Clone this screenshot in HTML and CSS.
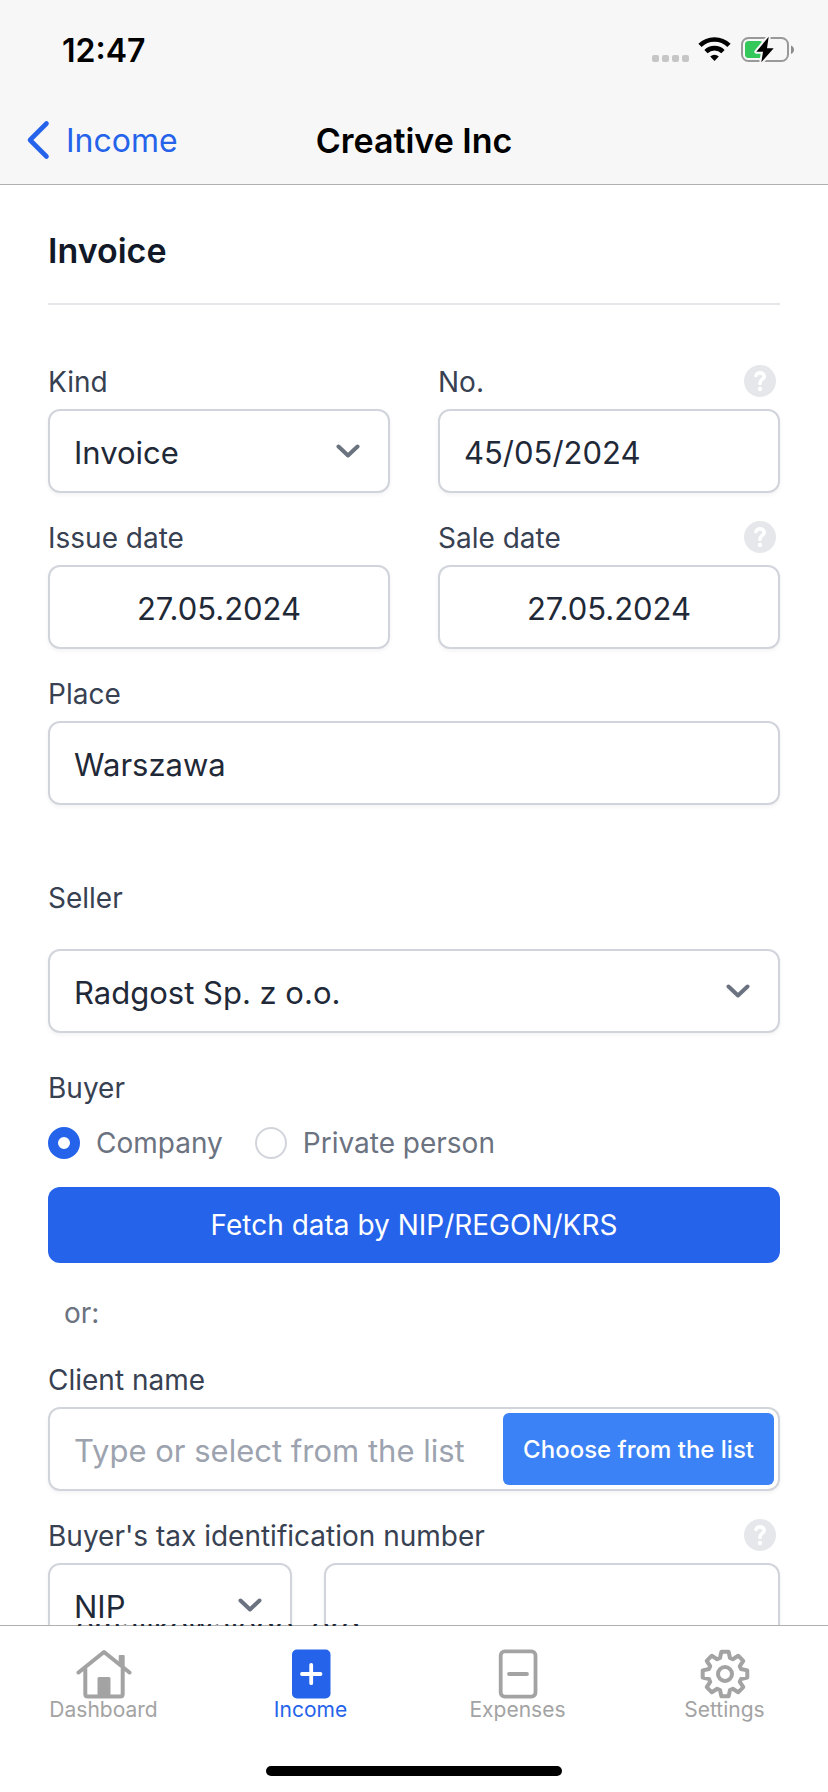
FILE: index.html
```html
<!DOCTYPE html>
<html lang="en">
<head>
<meta charset="utf-8">
<meta name="viewport" content="width=device-width, initial-scale=1">
<title>Creative Inc</title>
<link rel="stylesheet" href="styles.css">
</head>
<body class="app">
<header class="topbar">
  <div class="status">
    <time class="clock">12:47</time>
    <div class="status-icons">
      <svg width="37" height="7" viewBox="0 0 37 7" fill="#c6c6c6"><rect width="7" height="7" rx="2"/><rect x="10" width="7" height="7" rx="2"/><rect x="20" width="7" height="7" rx="2"/><rect x="30" width="7" height="7" rx="2"/></svg>
      <svg class="wifi" width="33" height="26" viewBox="0 0 33 26" fill="none" stroke="#000" stroke-width="4.6"><path d="M2 9.4a20.6 20.6 0 0 1 29 0"/><path d="M8 15.7a12 12 0 0 1 17 0"/><path d="M12.2 20.4a6.2 6.2 0 0 1 8.6 0L16.500 25z" fill="#000" stroke="none"/></svg>
      <svg width="55" height="28" viewBox="0 0 55 28"><rect x="2" y="2" width="46" height="23" rx="6.500" fill="none" stroke="#999" stroke-width="2"/><path d="M51 9.500c4 1.500 4 7 0 8.500z" fill="#8c8c8c"/><rect x="5" y="5" width="18" height="17" rx="3.500" fill="#34c759"/><path d="M28.700.7 16.300 15.700H23L21.300 26.300 33.700 12.300H27z" fill="#000" stroke="#f7f7f7" stroke-width="4" stroke-linejoin="round" paint-order="stroke"/></svg>
    </div>
  </div>
  <nav class="nav">
    <a class="back" href="#income"><svg width="24" height="40" viewBox="0 0 24 40" fill="none" stroke="#2563eb" stroke-width="4.600" stroke-linecap="round" stroke-linejoin="round"><path d="M20.500 3.500 4 20l16.500 16.500"/></svg>Income</a>
    <h1 class="nav-title">Creative Inc</h1>
  </nav>
</header>

<main class="content">
  <h2 class="heading">Invoice</h2>
  <form class="form">
    <div class="row">
      <div class="field">
        <div class="label-row"><label for="kind">Kind</label></div>
        <div class="select"><select class="control" id="kind"><option>Invoice</option></select><svg class="chevron" viewBox="0 0 24 14"><path d="M2.500 2.500 12 11.500l9.500-9"/></svg></div>
      </div>
      <div class="field">
        <div class="label-row"><label for="no">No.</label><button class="help" type="button" aria-label="Help: No."><svg viewBox="0 0 32 32"><path d="M12 10.500c.6-1.700 2.100-2.600 4-2.600 2.400 0 4.200 1.400 4.200 3.500 0 3-4.200 3-4.200 6.400v.7"/><circle cx="16" cy="24" r="2.200"/></svg></button></div>
        <input class="control" id="no" type="text" value="45/05/2024">
      </div>
    </div>
    <div class="row">
      <div class="field">
        <div class="label-row"><label for="issue">Issue date</label></div>
        <input class="control centered" id="issue" type="text" value="27.05.2024">
      </div>
      <div class="field">
        <div class="label-row"><label for="sale">Sale date</label><button class="help" type="button" aria-label="Help: Sale date"><svg viewBox="0 0 32 32"><path d="M12 10.500c.6-1.700 2.100-2.600 4-2.600 2.400 0 4.200 1.400 4.200 3.500 0 3-4.200 3-4.200 6.400v.7"/><circle cx="16" cy="24" r="2.200"/></svg></button></div>
        <input class="control centered" id="sale" type="text" value="27.05.2024">
      </div>
    </div>
    <div class="field">
      <div class="label-row"><label for="place">Place</label></div>
      <input class="control" id="place" type="text" value="Warszawa">
    </div>
    <div class="field seller">
      <div class="label-row"><label for="seller">Seller</label></div>
      <div class="select"><select class="control" id="seller"><option>Radgost Sp. z o.o.</option></select><svg class="chevron" viewBox="0 0 24 14"><path d="M2.500 2.500 12 11.500l9.500-9"/></svg></div>
    </div>
    <fieldset class="buyer">
      <legend class="legend">Buyer</legend>
      <div class="radios">
        <label class="radio"><input type="radio" name="buyer" checked>Company</label>
        <label class="radio"><input type="radio" name="buyer">Private person</label>
      </div>
    </fieldset>
    <button class="fetch" type="button">Fetch data by NIP/REGON/KRS</button>
    <p class="or">or:</p>
    <div class="field">
      <div class="label-row"><label for="client">Client name</label></div>
      <div class="combo"><input class="combo-input" id="client" type="text" placeholder="Type or select from the list"><button class="choose" type="button">Choose from the list</button></div>
    </div>
    <div class="field">
      <div class="label-row"><label for="tax">Buyer's tax identification number</label><button class="help" type="button" aria-label="Help: tax identification number"><svg viewBox="0 0 32 32"><path d="M12 10.500c.6-1.700 2.100-2.600 4-2.600 2.400 0 4.200 1.400 4.200 3.500 0 3-4.200 3-4.200 6.400v.7"/><circle cx="16" cy="24" r="2.200"/></svg></button></div>
      <div class="tax">
        <div class="select"><select class="control" aria-label="Identifier type"><option>NIP</option></select><svg class="chevron" viewBox="0 0 24 14"><path d="M2.500 2.500 12 11.500l9.500-9"/></svg></div>
        <input class="control" id="tax" type="text">
      </div>
    </div>
  </form>
</main>

<footer class="bottom">
  <div class="peek">emailkowalego .org</div>
  <nav class="tabs">
    <a class="tab" href="#dashboard"><svg width="56" height="50" viewBox="-28 -25 56 50" fill="none" stroke="#a3a3a3" stroke-width="4" stroke-linecap="round" stroke-linejoin="round"><path d="M-25.500-1.500 0-22 25.500-1.500M-18.700-5v25q0 2.500 2.500 2.500h32.400q2.500 0 2.500-2.500V-5"/><path d="M-6.500 22.500V4.500q0-1.500 1.500-1.500H5q1.500 0 1.500 1.500v18zM14.700-10v-8q0-1 1-1h4q1 0 1 1v13z" fill="#a3a3a3" stroke="none"/></svg>Dashboard</a>
    <a class="tab active" href="#income"><svg width="56" height="50" viewBox="-28 -25 56 50" fill="none" stroke-linecap="round"><rect x="-19" y="-24.500" width="38.500" height="49" rx="5" fill="#2563eb"/><path d="M-9 0H9.500M.2-9.200V9.200" stroke="#fff" stroke-width="3.800"/></svg>Income</a>
    <a class="tab" href="#expenses"><svg width="56" height="50" viewBox="-28 -25 56 50" fill="none" stroke="#a3a3a3" stroke-width="3.800" stroke-linecap="round"><rect x="-17.300" y="-22.600" width="34.800" height="45.200" rx="4"/><path d="M-9 0H9"/></svg>Expenses</a>
    <a class="tab" href="#settings"><svg width="56" height="50" viewBox="-28 -25 56 50" fill="none" stroke="#a3a3a3" stroke-width="4" stroke-linejoin="round"><circle r="7"/><path d="M-5-16-3.600-22.300H3.600L5-16 7.800-14.800 13.200-18.300 18.300-13.200 14.800-7.800 16-5 22.300-3.600V3.600L16 5 14.800 7.800 18.300 13.200 13.200 18.300 7.800 14.800 5 16 3.600 22.300H-3.600L-5 16-7.800 14.800-13.200 18.300-18.300 13.200-14.800 7.800-16 5-22.300 3.600V-3.600L-16-5-14.800-7.800-18.300-13.200-13.200-18.300-7.800-14.800z"/></svg>Settings</a>
  </nav>
  <div class="home-bar"></div>
</footer>
</body>
</html>
```
FILE: styles.css
```css
*, *::before, *::after { box-sizing: border-box; }

.app {
  display: flex;
  flex-direction: column;
  height: 100vh;
  margin: 0;
  overflow: hidden;
  background: #fff;
  color: #1f2937;
  font-family: Inter, "Liberation Sans", sans-serif;
}

button, input, select { font-family: inherit; margin: 0; }

.topbar {
  flex: none;
  background: #f7f7f7;
  border-bottom: 1px solid #b0b0b0;
  color: #000;
}

.status {
  display: flex;
  align-items: center;
  justify-content: space-between;
  height: 100px;
  padding: 0 33px 0 62px;
}

.clock { font-size: 32px; font-weight: 600; }

.status-icons { display: flex; align-items: flex-end; gap: 9px; }
.status-icons svg { display: block; margin-bottom: 2px; }
.status-icons svg:last-child { margin-bottom: 0; }

.nav {
  display: grid;
  grid-template-columns: 1fr auto 1fr;
  align-items: center;
  height: 84px;
  padding: 0 26px 4px;
}

.back {
  display: flex;
  align-items: center;
  gap: 16px;
  color: #2563eb;
  font-size: 32px;
  text-decoration: none;
}

.nav-title { margin: 0; font-size: 34px; font-weight: 600; }

.content {
  flex: 1;
  min-height: 0;
  overflow: hidden;
  padding: 46px 48px 0;
}

.heading {
  margin: 0;
  padding-bottom: 32px;
  border-bottom: 2px solid #e5e7eb;
  color: #111827;
  font-size: 34px;
  font-weight: 600;
  line-height: 40px;
}

.form { display: flex; flex-direction: column; gap: 28px; padding-top: 60px; }

.row { display: grid; grid-template-columns: 1fr 1fr; gap: 48px; }

.field { display: flex; flex-direction: column; gap: 12px; min-width: 0; }

.label-row {
  display: flex;
  align-items: center;
  justify-content: space-between;
  height: 32px;
  padding-right: 4px;
}
.label-row label { padding-top: 2px; }

.label-row, .legend { color: #374151; font-size: 28px; font-weight: 400; line-height: 32px; }

.help {
  width: 32px;
  height: 32px;
  padding: 0;
  border: 0;
  border-radius: 50%;
  background: #e5e7eb;
}
.help svg { display: block; fill: #fff; }
.help path { fill: none; stroke: #fff; stroke-width: 3.6; stroke-linecap: round; }

.control, .combo {
  width: 100%;
  height: 84px;
  border: 2px solid #d1d5db;
  border-radius: 12px;
  background: #fff;
  box-shadow: 0 2px 4px rgba(0, 0, 0, 0.05);
}
.control { padding: 2px 24px 0; color: #1f2937; font-size: 31px; appearance: none; }
.centered { text-align: center; }

.select { position: relative; }
.chevron {
  position: absolute;
  top: 35px;
  right: 30px;
  width: 24px;
  height: 14px;
  fill: none;
  stroke: #6b7280;
  stroke-width: 4;
  stroke-linecap: round;
  stroke-linejoin: round;
  pointer-events: none;
}

.seller { gap: 36px; margin-top: 48px; }

.buyer { margin: 11px 0 0; padding: 0; border: 0; }
.legend { padding: 0; }
.radios { display: flex; gap: 32px; padding-top: 23px; }
.radio {
  display: flex;
  align-items: center;
  gap: 16px;
  color: #6b7280;
  font-size: 28px;
  font-weight: 400;
  line-height: 32px;
}
.radio input {
  width: 32px;
  height: 32px;
  border: 2px solid #d1d5db;
  border-radius: 50%;
  background: #fff;
  appearance: none;
}
.radio input:checked { border: 10px solid #2563eb; }

.fetch {
  height: 76px;
  border: 0;
  border-radius: 12px;
  background: #2563eb;
  color: #fff;
  font-size: 28px;
  font-weight: 400;
}

.or { margin: 6px 0; padding-left: 16px; color: #6b7280; font-size: 28px; font-weight: 400; line-height: 32px; }

.combo { display: flex; padding: 4px; }
.combo-input {
  flex: 1;
  min-width: 0;
  padding: 2px 0 0 20px;
  border: 0;
  background: transparent;
  color: #1f2937;
  font-size: 31px;
}
.combo-input::placeholder { color: #9ca3af; opacity: 1; }
.choose {
  padding: 0 20px;
  border: 0;
  border-radius: 6px;
  background: #3b82f6;
  color: #fff;
  font-size: 24px;
  font-weight: 500;
}

.tax { display: grid; grid-template-columns: 15fr 28fr; gap: 32px; }

.bottom { position: relative; flex: none; padding-bottom: 16px; border-top: 1px solid #b0b0b0; background: #fff; }

.peek {
  position: absolute;
  top: -2px;
  left: 76px;
  display: flex;
  align-items: center;
  height: 2px;
  overflow: hidden;
  color: #1f2937;
  font-size: 31px;
}

.tabs { display: grid; grid-template-columns: repeat(4, 1fr); padding-top: 23px; }
.tab {
  display: flex;
  flex-direction: column;
  align-items: center;
  color: #a3a3a3;
  font-size: 21px;
  line-height: 22px;
  text-decoration: none;
}
.tab.active { color: #2563eb; }

.home-bar { width: 296px; height: 10px; margin: 45px auto 0; border-radius: 5px; background: #000; }
```
